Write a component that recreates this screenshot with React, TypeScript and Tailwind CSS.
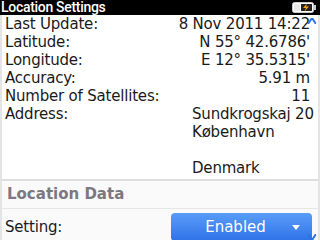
import React from 'react';

const rows: [string, string][] = [
  ['Last Update:', '8 Nov 2011 14:22'],
  ['Latitude:', 'N 55° 42.6786\''],
  ['Longitude:', 'E 12° 35.5315\''],
  ['Accuracy:', '5.91 m'],
  ['Number of Satellites:', '11'],
];

const address = ['Sundkrogskaj 20', 'København', '', 'Denmark'];

function Battery() {
  return (
    <svg width="24" height="11" viewBox="0 0 24 11">
      <rect x="0.5" y="0.5" width="21" height="10" rx="2" fill="#fff" stroke="#ccc" />
      <rect x="22" y="3" width="2" height="5" fill="#ccc" />
      <rect x="2" y="2" width="6" height="7" fill="#e8e8e8" />
      <rect x="9" y="2" width="11" height="7" fill="#222" />
      <path d="M15 1.5 L11 6 L14 6 L12 10 L17 4.5 L14 4.5 Z" fill="#f7a21b" />
    </svg>
  );
}

export default function App() {
  return (
    <div className="w-[320px] h-[240px] overflow-hidden bg-white relative" style={{ fontFamily: '"DejaVu Sans", sans-serif' }}>
      <div className="h-[15px] bg-black flex items-center justify-between pl-[1px] pr-[4px]">
        <span className="text-white text-[14px] leading-[15px] font-medium tracking-[-0.3px]" style={{ fontFamily: 'Roboto, sans-serif' }}>
          Location Settings
        </span>
        <Battery />
      </div>
      <div className="border-l-2 border-r-2 border-[#e4e4e4]">
        <div className="pl-[3px] pr-[8px] text-[15px] leading-[18px] tracking-[-0.2px] text-[#1a1a1a]">
          {rows.map(([label, value]) => (
            <div key={label} className="flex justify-between">
              <span>{label}</span>
              <span>{value}</span>
            </div>
          ))}
          <div className="flex">
            <span className="w-[187px] shrink-0">Address:</span>
            <div className="whitespace-nowrap">
              {address.map((line, i) => (
                <div key={i} className="h-[18px]">{line}</div>
              ))}
            </div>
          </div>
        </div>
        <div className="mt-[2px] border-t-2 border-[#dedede] bg-[#fafafa]">
          <div className="pl-[5px] h-[28px] flex items-center text-[15px] font-bold text-[#7b7880] border-b border-[#e6e6e6]">
            Location Data
          </div>
          <div className="flex items-center justify-between pl-[3px] pr-[6px] h-[36px]">
            <span className="text-[15px] tracking-[-0.2px] text-[#1a1a1a]">Setting:</span>
            <div className="w-[141px] h-[28px] rounded-[4px] bg-gradient-to-b from-[#5a9cf7] to-[#2f72e8] flex items-center text-white">
              <span className="flex-1 text-center text-[15px] pl-[8px]">Enabled</span>
              <svg width="8" height="5" viewBox="0 0 8 5" className="mr-[12px]">
                <path d="M0 0 L8 0 L4 5 Z" fill="#fff" />
              </svg>
            </div>
          </div>
        </div>
      </div>
      <svg width="8" height="6" viewBox="0 0 8 6" className="absolute right-[4px] top-[18px]">
        <path d="M0 6 L4 0 L8 6" fill="none" stroke="#2f72e8" strokeWidth="2" />
      </svg>
      <svg width="8" height="6" viewBox="0 0 8 6" className="absolute right-[4px] bottom-[0px]">
        <path d="M0 0 L4 6 L8 0" fill="none" stroke="#2f72e8" strokeWidth="2" />
      </svg>
    </div>
  );
}
